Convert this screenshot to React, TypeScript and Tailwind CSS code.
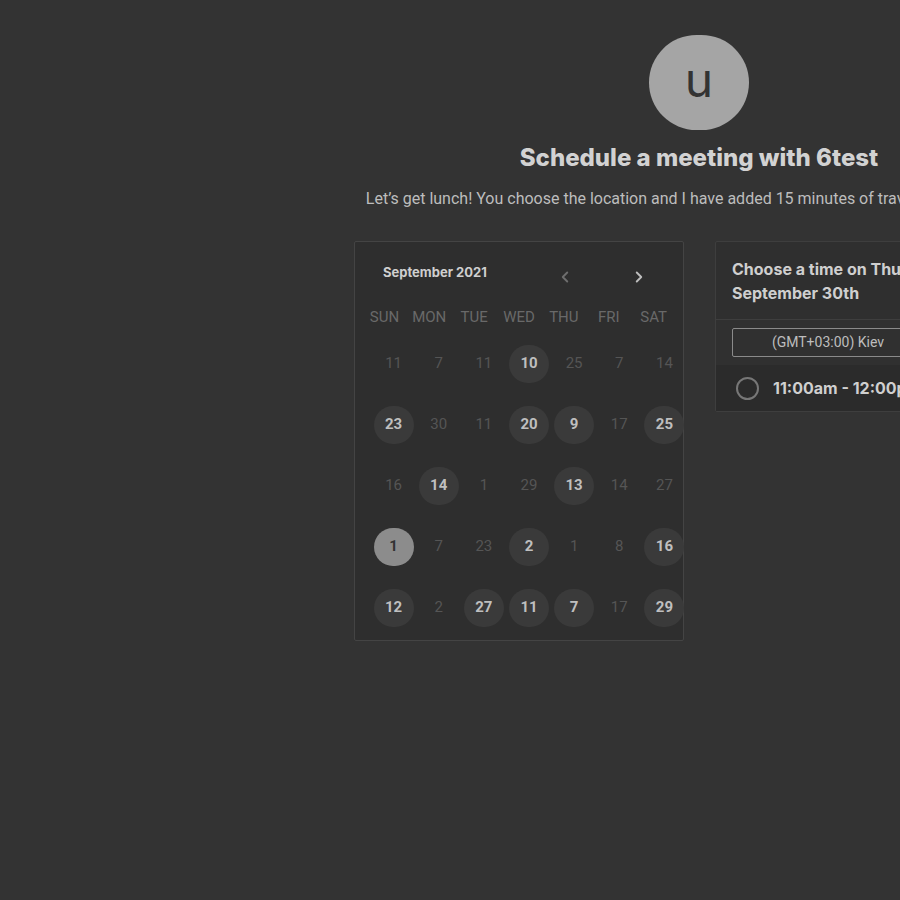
import { ChevronLeft, ChevronRight } from 'lucide-react'

type Day = { n: number; on?: boolean; sel?: boolean }

const weeks: Day[][] = [
  [{ n: 11 }, { n: 7 }, { n: 11 }, { n: 10, on: true }, { n: 25 }, { n: 7 }, { n: 14 }],
  [{ n: 23, on: true }, { n: 30 }, { n: 11 }, { n: 20, on: true }, { n: 9, on: true }, { n: 17 }, { n: 25, on: true }],
  [{ n: 16 }, { n: 14, on: true }, { n: 1 }, { n: 29 }, { n: 13, on: true }, { n: 14 }, { n: 27 }],
  [{ n: 1, sel: true }, { n: 7 }, { n: 23 }, { n: 2, on: true }, { n: 1 }, { n: 8 }, { n: 16, on: true }],
  [{ n: 12, on: true }, { n: 2 }, { n: 27, on: true }, { n: 11, on: true }, { n: 7, on: true }, { n: 17 }, { n: 29, on: true }],
]

const weekdays = ['SUN', 'MON', 'TUE', 'WED', 'THU', 'FRI', 'SAT']

function DayCell({ day }: { day: Day }) {
  if (day.sel) {
    return (
      <div className="flex items-center justify-center h-[61px]">
        <div className="w-[40px] h-[38px] rounded-full bg-[#8c8c8c] text-[#333] font-bold text-[15px] flex items-center justify-center">
          {day.n}
        </div>
      </div>
    )
  }
  return (
    <div className="flex items-center justify-center h-[61px]">
      {day.on ? (
        <div className="w-[40px] h-[38px] rounded-full bg-[#3a3a3a] text-[#bfbfbf] font-bold text-[15px] flex items-center justify-center">
          {day.n}
        </div>
      ) : (
        <span className="text-[15px] text-[#555]">{day.n}</span>
      )}
    </div>
  )
}

export default function App() {
  return (
    <div className="w-full h-[900px] overflow-hidden bg-[#333333] font-['Roboto',sans-serif]">
      <div className="w-[1398px] flex flex-col items-center pt-[35px]">
        {/* Avatar */}
        <div className="w-[100px] h-[95px] rounded-full bg-[#a5a5a5] flex items-center justify-center">
          <span className="text-[48px] leading-none text-[#333] font-['Inter',sans-serif] -mt-[6px]">u</span>
        </div>

        <h1 className="mt-[13px] text-[24px] font-extrabold text-[#d2d2d2] font-['Inter',sans-serif] leading-[30px]">
          Schedule a meeting with 6test
        </h1>
        <p className="mt-[16px] text-[16px] text-[#bdbdbd] leading-[20px]">
          Let’s get lunch! You choose the location and I have added 15 minutes of travel time either way.
        </p>

        <div className="mt-[32px] flex gap-[31px] items-start">
          {/* Calendar */}
          <div className="w-[330px] h-[400px] bg-[#2e2e2e] border border-[#444] rounded-[2px]">
            <div className="flex items-center h-[59px] pl-[28px] pr-[35px] pt-[2px]">
              <span className="text-[13px] font-bold text-[#cfcfcf] font-['Inter',sans-serif] flex-1">September 2021</span>
              <ChevronLeft className="w-[18px] h-[18px] text-[#6e6e6e] mt-[8px]" strokeWidth={2.5} />
              <ChevronRight className="w-[18px] h-[18px] text-[#bdbdbd] mt-[8px] ml-[56px]" strokeWidth={2.5} />
            </div>
            <div className="grid grid-cols-7 w-[314px] ml-[7px] h-[32px] items-center">
              {weekdays.map((w) => (
                <span key={w} className="text-center text-[15px] text-[#696969]">
                  {w}
                </span>
              ))}
            </div>
            <div className="grid grid-cols-7 w-[316px] ml-[16px]">
              {weeks.map((week, i) =>
                week.map((d, j) => <DayCell key={`${i}-${j}`} day={d} />)
              )}
            </div>
          </div>

          {/* Times */}
          <div className="w-[329px] bg-[#2f2f2f] border border-[#3e3e3e] rounded-[2px] font-['Inter',sans-serif]">
            <div className="px-[16px] pt-[15px] pb-[14px] border-b border-[#3e3e3e]">
              <p className="text-[16px] font-bold text-[#cfcfcf] leading-[24px]">
                Choose a time on Thursday,
                <br />
                September 30th
              </p>
            </div>
            <div className="px-[16px] py-[8px] bg-[#303030]">
              <div className="w-[192px] h-[29px] border border-[#8a8a8a] rounded-[2px] flex items-center justify-center text-[14px] text-[#bdbdbd] font-['Roboto',sans-serif]">
                (GMT+03:00) Kiev
              </div>
            </div>
            <div className="flex items-center h-[46px] px-[20px] bg-[#2b2b2b] gap-[14px]">
              <div className="w-[23px] h-[23px] rounded-full border-2 border-[#777]" />
              <span className="text-[16px] font-bold text-[#cfcfcf]">11:00am - 12:00pm</span>
            </div>
          </div>
        </div>
      </div>
    </div>
  )
}
